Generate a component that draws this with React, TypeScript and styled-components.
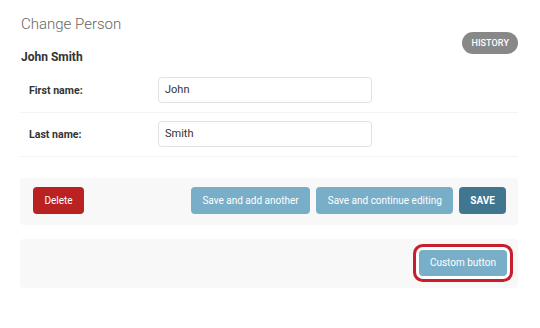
import React from "react";
import styled, { createGlobalStyle } from "styled-components";

const GlobalStyle = createGlobalStyle`
  html, body { margin: 0; padding: 0; background: #fff; }
  body { font-family: Roboto, "Liberation Sans", Arial, sans-serif; color: #333; }
  * { box-sizing: border-box; }
`;

const Page = styled.div`
  width: 540px;
  padding: 15px 22px 0 20px;
  display: flex;
  flex-direction: column;
`;

const Title = styled.h1`
  margin: 0 0 0 1px;
  font-size: 15px;
  line-height: 19px;
  font-weight: 300;
  color: #666;
`;

const HeaderRow = styled.div`
  display: flex;
  justify-content: space-between;
  align-items: flex-start;
`;

const ObjectName = styled.h2`
  margin: 15px 0 0 1px;
  font-size: 12px;
  line-height: 16px;
  font-weight: 700;
  color: #333;
`;

const HistoryButton = styled.a`
  display: inline-block;
  margin: -2px 0 0 0;
  height: 22px;
  line-height: 22px;
  padding: 0 9px;
  border-radius: 11px;
  background: #888;
  color: #fff;
  font-size: 9px;
  font-weight: 500;
  letter-spacing: 0.1px;
  text-transform: uppercase;
`;

const Fieldset = styled.div`
  margin-top: 4px;
  display: flex;
  flex-direction: column;
`;

const FormRow = styled.div`
  display: flex;
  align-items: center;
  padding: 8px 10px 9px 9px;
  border-bottom: 1px solid #f4f4f4;
`;

const Label = styled.label`
  width: 129px;
  font-size: 10.6px;
  font-weight: 700;
  color: #333;
`;

const Input = styled.div`
  width: 214px;
  height: 26px;
  line-height: 24px;
  border: 1px solid #e2e2e2;
  border-radius: 4px;
  padding: 0 6px;
  font-size: 11px;
  color: #333;
`;

const Panel = styled.div<{ $top: number }>`
  margin-top: ${(p) => p.$top}px;
  background: #f8f8f8;
  border-radius: 4px;
  display: flex;
  align-items: center;
  gap: 6px;
  padding: 9px 12px 11px 13px;
`;

const Button = styled.a<{ $kind?: "delete" | "light" | "default" }>`
  display: inline-block;
  height: 27px;
  line-height: 27px;
  padding: 0 ${(p) => (p.$kind === "default" ? 11 : 11.5)}px;
  border-radius: 4px;
  font-size: 10px;
  color: #fff;
  white-space: nowrap;
  background: ${(p) =>
    p.$kind === "delete" ? "#ba2121" : p.$kind === "default" ? "#417690" : "#79aec8"};
  font-weight: ${(p) => (p.$kind === "default" ? 700 : 400)};
  text-transform: ${(p) => (p.$kind === "default" ? "uppercase" : "none")};
  margin-right: ${(p) => (p.$kind === "delete" ? "auto" : "0")};
`;

const CustomPanel = styled.div`
  margin-top: 14px;
  background: #f8f8f8;
  border-radius: 4px;
  display: flex;
  justify-content: flex-end;
  padding: 11px 11px 12px;
`;

const HighlightedButton = styled(Button)`
  height: 26px;
  line-height: 26px;
  padding: 0 11px;
  box-shadow: 0 0 0 3px #fff, 0 0 0 6px #c81d2b;
  border-radius: 4px;
`;

export default function App() {
  return (
    <>
      <GlobalStyle />
      <Page>
        <Title>Change Person</Title>
        <HeaderRow>
          <ObjectName>John Smith</ObjectName>
          <HistoryButton>History</HistoryButton>
        </HeaderRow>
        <Fieldset>
          <FormRow>
            <Label>First name:</Label>
            <Input>John</Input>
          </FormRow>
          <FormRow>
            <Label>Last name:</Label>
            <Input>Smith</Input>
          </FormRow>
        </Fieldset>
        <Panel $top={21}>
          <Button $kind="delete">Delete</Button>
          <Button $kind="light">Save and add another</Button>
          <Button $kind="light">Save and continue editing</Button>
          <Button $kind="default">Save</Button>
        </Panel>
        <CustomPanel>
          <HighlightedButton $kind="light">Custom button</HighlightedButton>
        </CustomPanel>
      </Page>
    </>
  );
}
